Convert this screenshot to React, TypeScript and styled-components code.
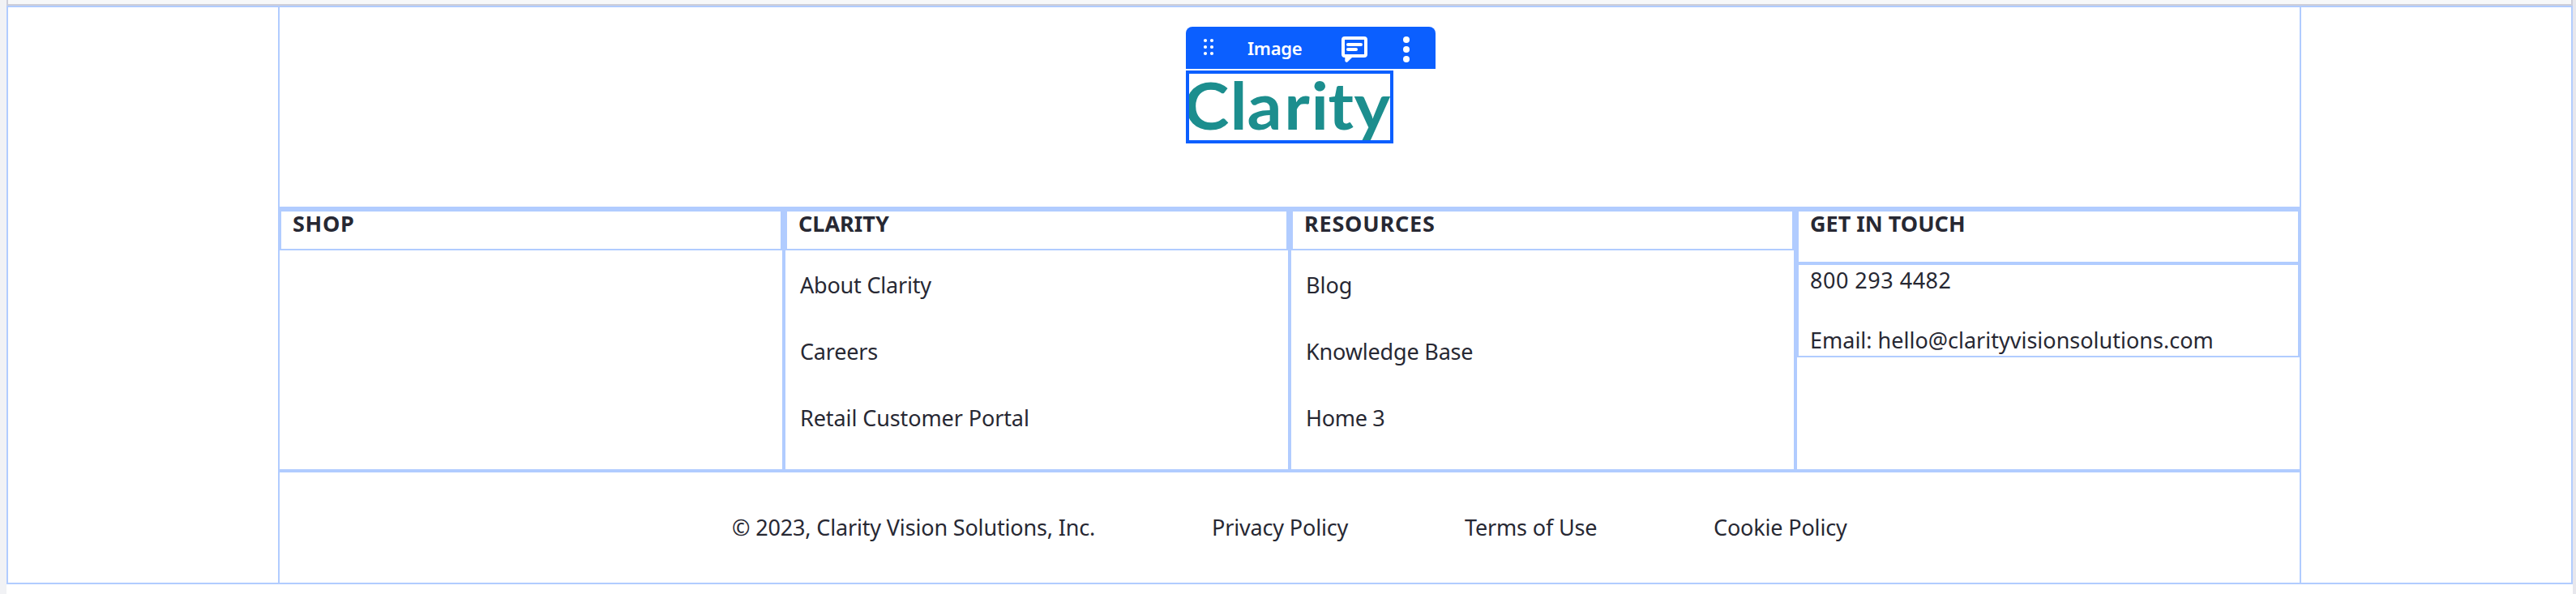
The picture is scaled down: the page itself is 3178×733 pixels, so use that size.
import React from 'react';
import styled, { createGlobalStyle } from 'styled-components';

const LINE = '#b1ccff';
const BLUE = '#0b5fff';

const Global = createGlobalStyle`
  *, *::before, *::after { box-sizing: border-box; }
  html, body { margin: 0; background: #fff; overflow: hidden; }
  body { font-family: "Noto Sans", sans-serif; color: #272833; font-size: 27px; }
`;

const Page = styled.div`
  display: flex;
  width: 3178px;
  height: 733px;
`;

const Gutter = styled.div<{ $w: number; $c: string }>`
  flex: none;
  width: ${p => p.$w}px;
  background: ${p => p.$c};
`;

const Canvas = styled.div`
  flex: 1;
  display: flex;
  flex-direction: column;
  background: #fff;
`;

const PreviousSection = styled.div`
  height: 7px;
  border: 2px solid #cdced9;
  border-top: 0;
  background: #f7f8f9;
`;

const Footer = styled.footer`
  height: 714px;
  border: 2px solid ${LINE};
  display: flex;
  flex-direction: column;
  align-items: center;
`;

const LogoSection = styled.section`
  width: 2496px;
  height: 248px;
  border: 2px solid ${LINE};
  border-top: 0;
  padding: 24px 0 0 1118px;
`;

const Toolbar = styled.div`
  display: flex;
  align-items: center;
  width: 308px;
  height: 52px;
  border-radius: 8px 8px 0 0;
  background: ${BLUE};
  color: #fff;
`;

const ToolLabel = styled.span`
  width: 114px;
  padding-left: 40px;
  font-size: 22px;
  font-weight: 600;
  line-height: 51px;
  letter-spacing: -0.3px;
  white-space: nowrap;
`;

const ToolIcon = styled.svg<{ $left: number }>`
  flex: none;
  display: block;
  margin-left: ${p => p.$left}px;
  fill: currentColor;
`;

/* The selection border is painted over the logo, so it hides the letter edges. */
const LogoFrame = styled.div`
  position: relative;
  width: 256px;
  height: 90px;
  margin-top: 2px;

  &::after {
    content: '';
    position: absolute;
    inset: 0;
    border: 4px solid ${BLUE};
  }
`;

const Wordmark = styled.div`
  display: flex;
  width: 240px;
  font: 700 80px/85px Lato, sans-serif;
  color: #1c8e8e;
  transform: scaleX(1.06);
  transform-origin: 0 0;
`;

const Letter = styled.span<{ $shift?: number }>`
  margin-left: ${p => p.$shift ?? 0}px;
`;

const Columns = styled.div`
  display: flex;
  width: 2496px;
  height: 324px;
`;

const Column = styled.section`
  flex: 1;
  border: 2px solid ${LINE};
`;

const Heading = styled.h4<{ $h: number; $ls?: number }>`
  margin: 0;
  height: ${p => p.$h}px;
  border: 2px solid ${LINE};
  padding-left: 14px;
  font-size: 27px;
  font-weight: 700;
  line-height: 29px;
  letter-spacing: ${p => p.$ls ?? 0}px;
  white-space: nowrap;
`;

const Links = styled.ul`
  list-style: none;
  margin: 0;
  padding: 2px 0 0 18px;
`;

const LinkItem = styled.li<{ $ls?: number }>`
  height: 82px;
  line-height: 81px;
  letter-spacing: ${p => p.$ls ?? 0}px;
  white-space: nowrap;
`;

const Contact = styled.div`
  height: 116px;
  border: 2px solid ${LINE};
  padding-left: 14px;
`;

const ContactLine = styled.p<{ $ls?: number }>`
  margin: 0;
  height: 74px;
  line-height: 37px;
  letter-spacing: ${p => p.$ls ?? 0}px;
  white-space: nowrap;
`;

const Legal = styled.section`
  display: flex;
  width: 2496px;
  height: 138px;
  border: 2px solid ${LINE};
  border-bottom: 0;
  padding-left: 558px;
  line-height: 135px;
`;

const LegalItem = styled.span<{ $w: number }>`
  width: ${p => p.$w}px;
  letter-spacing: -0.16px;
  white-space: nowrap;
`;

export default function App() {
  return (
    <Page>
      <Global />
      <Gutter $w={8} $c="#f1f2f5" />
      <Canvas>
        <PreviousSection />
        <Footer>
          <LogoSection>
            <Toolbar>
              <ToolIcon $left={20} width="16" height="24" viewBox="0 0 16 24">
                {[3, 11, 19].map(y => (
                  <g key={y}>
                    <circle cx="4" cy={y} r="2.1" />
                    <circle cx="12" cy={y} r="2.1" />
                  </g>
                ))}
              </ToolIcon>
              <ToolLabel>Image</ToolLabel>
              <ToolIcon $left={42} width="32" height="36" viewBox="0 -4 32 36">
                <path
                  fillRule="evenodd"
                  d="M4 0H28a4 4 0 0 1 4 4V22a4 4 0 0 1-4 4H13L7.400 31.400A2 2 0 0 1 4.300 29.600V26H4a4 4 0 0 1-4-4V4a4 4 0 0 1 4-4ZM4 4V22H28V4Z"
                />
                <rect x="6" y="8" width="20" height="4" rx="2" />
                <rect x="6" y="14" width="14" height="4" rx="2" />
              </ToolIcon>
              <ToolIcon $left={44} width="8" height="36" viewBox="0 0 8 36">
                <circle cx="4" cy="8" r="4" />
                <circle cx="4" cy="20" r="4" />
                <circle cx="4" cy="32" r="4" />
              </ToolIcon>
            </Toolbar>
            <LogoFrame>
              <Wordmark>
                <Letter $shift={-2.5}>C</Letter>
                <Letter $shift={1}>l</Letter>
                <Letter $shift={0}>a</Letter>
                <Letter $shift={2.5}>r</Letter>
                <Letter $shift={1.5}>i</Letter>
                <Letter $shift={-0.5}>t</Letter>
                <Letter $shift={0.5}>y</Letter>
              </Wordmark>
            </LogoFrame>
          </LogoSection>
          <Columns>
            <Column>
              <Heading $h={50} $ls={0.7}>SHOP</Heading>
            </Column>
            <Column>
              <Heading $h={50}>CLARITY</Heading>
              <Links>
                <LinkItem $ls={-0.2}>About Clarity</LinkItem>
                <LinkItem $ls={-0.2}>Careers</LinkItem>
                <LinkItem $ls={-0.1}>Retail Customer Portal</LinkItem>
              </Links>
            </Column>
            <Column>
              <Heading $h={50} $ls={0.8}>RESOURCES</Heading>
              <Links>
                <LinkItem>Blog</LinkItem>
                <LinkItem $ls={-0.18}>Knowledge Base</LinkItem>
                <LinkItem $ls={-0.3}>Home 3</LinkItem>
              </Links>
            </Column>
            <Column>
              <Heading $h={66}>GET IN TOUCH</Heading>
              <Contact>
                <ContactLine $ls={0.5}>800 293 4482</ContactLine>
                <ContactLine>Email: hello@clarityvisionsolutions.com</ContactLine>
              </Contact>
            </Column>
          </Columns>
          <Legal>
            <LegalItem $w={592}>© 2023, Clarity Vision Solutions, Inc.</LegalItem>
            <LegalItem $w={312}>Privacy Policy</LegalItem>
            <LegalItem $w={307}>Terms of Use</LegalItem>
            <LegalItem $w={180}>Cookie Policy</LegalItem>
          </Legal>
        </Footer>
      </Canvas>
      <Gutter $w={4} $c="#e7e7ed" />
    </Page>
  );
}
